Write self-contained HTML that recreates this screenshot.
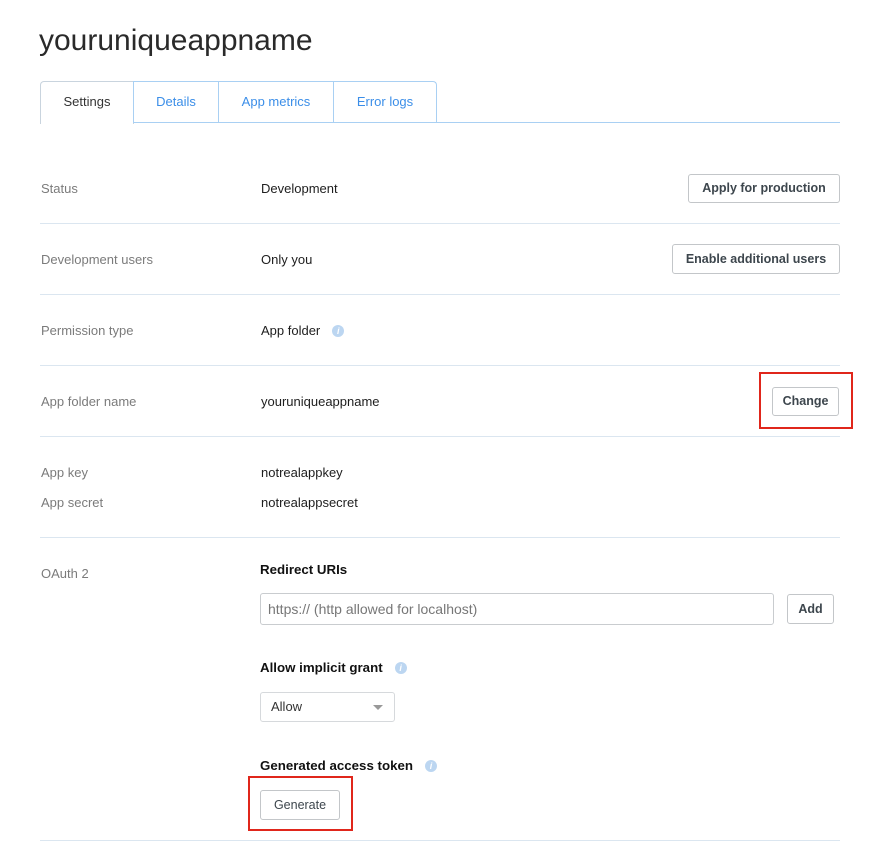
<!DOCTYPE html><html><head><style>
body{margin:0;width:884px;height:842px;background:#fff;font-family:"Liberation Sans",sans-serif;font-size:13px;color:#1e1e1e;position:relative;overflow:hidden}
.a{position:absolute;white-space:nowrap}
.l{color:#7b7b7b}
.hr{position:absolute;left:40px;width:800px;height:1px;background:#dbe6f0}
.btn{position:absolute;border:1px solid #c3c6c9;border-radius:3px;background:#fff;font-weight:bold;color:#3d464d;text-align:center;box-sizing:border-box;font-size:12.5px}
.red{position:absolute;border:2px solid #e0261b;box-sizing:border-box}
.tab{position:absolute;top:81px;height:42px;border:1px solid #a9d0f3;border-bottom:none;box-sizing:border-box;color:#3b8ee8;text-align:center;line-height:40px}
.i{display:inline-block;width:12px;height:12px;border-radius:50%;background:#bcd6f1;color:#fff;font-size:9px;font-style:italic;font-weight:bold;text-align:center;line-height:12px;margin-left:12px;vertical-align:1px}
b{color:#111;font-size:13.3px}
</style></head><body>
<div class="a" style="left:39px;top:24px;font-size:30px;color:#2a2a2a">youruniqueappname</div>
<div class="a" style="left:133px;top:122px;width:707px;height:1px;background:#a9d0f3"></div>
<div class="tab" style="left:40px;width:94px;color:#333;border-color:#c9d4de;border-radius:4px 0 0 0;height:43px;background:#fff">Settings</div>
<div class="tab" style="left:133px;width:86px">Details</div>
<div class="tab" style="left:218px;width:116px">App metrics</div>
<div class="tab" style="left:333px;width:104px;border-radius:0 4px 0 0">Error logs</div>

<div class="a l" style="left:41px;top:181px">Status</div>
<div class="a" style="left:261px;top:181px">Development</div>
<div class="btn" style="left:688px;top:174px;width:152px;height:29px;line-height:27px">Apply for production</div>
<div class="hr" style="top:223px"></div>
<div class="a l" style="left:41px;top:252px">Development users</div>
<div class="a" style="left:261px;top:252px">Only you</div>
<div class="btn" style="left:672px;top:244px;width:168px;height:30px;line-height:28px">Enable additional users</div>
<div class="hr" style="top:294px"></div>
<div class="a l" style="left:41px;top:323px">Permission type</div>
<div class="a" style="left:261px;top:323px">App folder<span class="i">i</span></div>
<div class="hr" style="top:365px"></div>
<div class="a l" style="left:41px;top:394px">App folder name</div>
<div class="a" style="left:261px;top:394px">youruniqueappname</div>
<div class="btn" style="left:772px;top:387px;width:67px;height:29px;line-height:27px">Change</div>
<div class="red" style="left:759px;top:372px;width:94px;height:57px"></div>
<div class="hr" style="top:436px"></div>
<div class="a l" style="left:41px;top:465px">App key</div>
<div class="a" style="left:261px;top:465px">notrealappkey</div>
<div class="a l" style="left:41px;top:495px">App secret</div>
<div class="a" style="left:261px;top:495px">notrealappsecret</div>
<div class="hr" style="top:537px"></div>
<div class="a l" style="left:41px;top:566px">OAuth 2</div>
<div class="a" style="left:260px;top:562px"><b>Redirect URIs</b></div>
<div class="a" style="left:260px;top:593px;width:514px;height:32px;border:1px solid #c9cccf;border-radius:3px;box-sizing:border-box;color:#777;padding-left:7px;line-height:30px;font-size:14px">https:// (http allowed for localhost)</div>
<div class="btn" style="left:787px;top:594px;width:47px;height:30px;line-height:28px">Add</div>
<div class="a" style="left:260px;top:660px"><b>Allow implicit grant</b><span class="i">i</span></div>
<div class="a" style="left:260px;top:692px;width:135px;height:30px;border:1px solid #d6d9dc;border-radius:3px;box-sizing:border-box;padding-left:10px;line-height:28px;color:#333">Allow<span style="position:absolute;left:112px;top:12px;border:5px solid transparent;border-top:5px solid #999;border-bottom:none"></span></div>
<div class="a" style="left:260px;top:758px"><b>Generated access token</b><span class="i">i</span></div>
<div class="btn" style="left:260px;top:790px;width:80px;height:30px;line-height:28px;font-weight:normal">Generate</div>
<div class="red" style="left:248px;top:776px;width:105px;height:55px"></div>
<div class="hr" style="top:840px"></div>
</body></html>
